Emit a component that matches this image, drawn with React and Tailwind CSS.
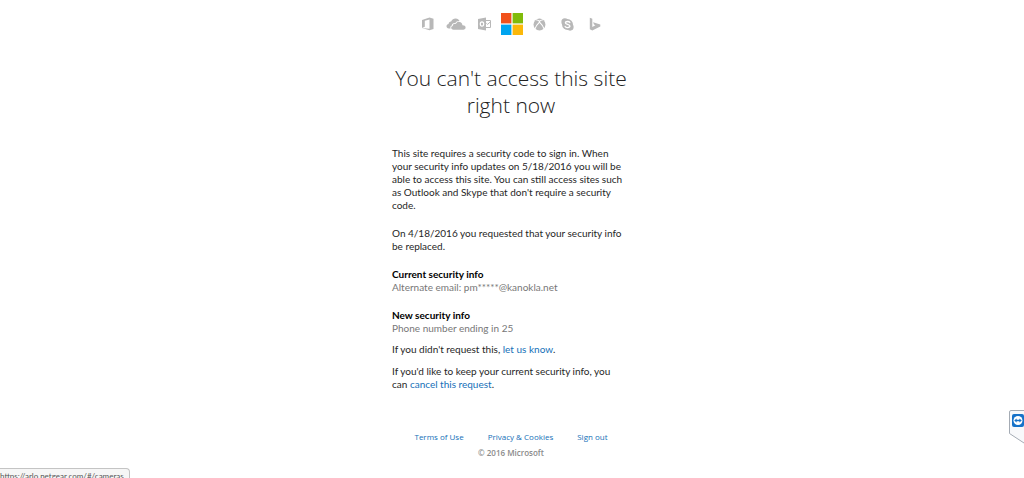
import React from 'react'

const OfficeIcon = () => (
  <svg viewBox="0 0 12 14" className="w-[12px] h-[14px]" fill="#b8b8b8" aria-label="Office">
    <path fillRule="evenodd" d="M0 3 L7.5 0.5 L11.5 1.7 V12 L7.5 13.3 L0 11 L7.5 11.8 V2.6 L2.8 3.7 V9.7 L0 11 Z" />
  </svg>
)

const OneDriveIcon = () => (
  <svg viewBox="0 0 20 12" className="w-[20px] h-[12px]" fill="#b8b8b8" aria-label="OneDrive">
    <path d="M4.6 10.5 H3 C1.2 10.5 0.5 9.4 0.5 8.2 C0.5 7 1.4 6 2.6 5.9 C2.6 4.4 3.8 3.4 5.1 3.5 C6 1.3 7.8 0.3 9.7 0.4 C11.6 0.5 13 1.6 13.6 3.1 C11.8 2.7 10.2 3.5 9.4 5 C7.2 4.7 5.8 6.1 5.8 7.5 C4.4 8 4 9.3 4.6 10.5 Z" />
    <path d="M7.6 11.7 C6 11.7 5.2 10.8 5.2 9.8 C5.2 8.8 6 8.1 6.8 8 C6.7 6.5 8.2 5.5 9.9 5.9 C10.6 4.3 12 3.7 13.4 3.9 C15.2 4.1 16.4 5.4 16.4 7.2 C18.3 7.1 19.6 8 19.6 9.5 C19.6 10.9 18.6 11.7 17.3 11.7 Z" />
  </svg>
)

const OutlookIcon = () => (
  <svg viewBox="0 0 13 14" className="w-[13px] h-[14px]" aria-label="Outlook">
    <path fill="#b8b8b8" d="M0 1.9 L8 0.5 V13.5 L0 12 Z" />
    <ellipse cx="4" cy="7" rx="1.7" ry="2.2" fill="none" stroke="#fff" strokeWidth="1.2" />
    <path fill="none" stroke="#b8b8b8" d="M8 3.5 H12.5 V10.5 H8 M8.3 6.2 L9.6 7.4 L12.4 4.8" />
  </svg>
)

const WindowsLogo = () => (
  <svg viewBox="0 0 22 22" className="w-[22px] h-[22px]" aria-label="Microsoft">
    <rect width="10.4" height="10.4" fill="#f1511b" />
    <rect x="11.6" width="10.4" height="10.4" fill="#80bb0a" />
    <rect y="11.6" width="10.4" height="10.4" fill="#00a4ef" />
    <rect x="11.6" y="11.6" width="10.4" height="10.4" fill="#fbb80a" />
  </svg>
)

const XboxIcon = () => (
  <svg viewBox="0 0 14 14" className="w-[13px] h-[13px]" aria-label="Xbox">
    <circle cx="7" cy="7" r="6.4" fill="#b8b8b8" />
    <path fill="none" stroke="#fff" strokeWidth="1.2" d="M3 1.9 C4.6 1.9 5.8 2.6 7 3.5 C8.2 2.6 9.4 1.9 11 1.9 M2 12 C3 9 4.8 6.4 7 4.4 C9.2 6.4 11 9 12 12" />
  </svg>
)

const SkypeIcon = () => (
  <svg viewBox="0 0 14 14" className="w-[13px] h-[13px]" aria-label="Skype">
    <circle cx="4.2" cy="4.2" r="3.8" fill="#b8b8b8" />
    <circle cx="9.8" cy="9.8" r="3.8" fill="#b8b8b8" />
    <circle cx="7" cy="7" r="5.9" fill="#b8b8b8" />
    <path fill="none" stroke="#fff" strokeWidth="1.4" strokeLinecap="round" d="M9.5 4.9 C8.9 3.4 4.7 3.3 4.7 5.2 C4.7 7.3 9.6 6.4 9.6 8.7 C9.6 10.8 5 10.8 4.4 9" />
  </svg>
)

const BingIcon = () => (
  <svg viewBox="0 0 12 14" className="w-[12px] h-[14px]" fill="#b8b8b8" aria-label="Bing">
    <path d="M0.8 0.8 L3.3 1.7 V10 L6.4 8.2 L5 7.5 L4.1 5.2 L11.3 7.4 V9.6 L3.3 13.6 L0.8 12.2 Z" />
  </svg>
)

const footerLinks = ['Terms of Use', 'Privacy & Cookies', 'Sign out']

const Brands = () => (
  <header className="flex items-center justify-center gap-[10px] pt-[13px] pr-[2px]">
    <div className="flex items-center gap-3">
      <OfficeIcon />
      <OneDriveIcon />
      <OutlookIcon />
    </div>
    <WindowsLogo />
    <div className="flex items-center gap-[15px]">
      <XboxIcon />
      <SkypeIcon />
      <BingIcon />
    </div>
  </header>
)

const Link = ({ children }) => (
  <a href="#" className="text-[#1570b8] hover:underline">{children}</a>
)

const SecurityInfo = ({ title, value }) => (
  <section>
    <h2 className="font-bold text-black">{title}</h2>
    <p className="text-[#777777]">{value}</p>
  </section>
)

export default function App() {
  return (
    <div className="bg-white font-['Open_Sans','Noto_Sans',sans-serif] text-[10px] leading-[13px] text-[#262626]">
      <Brands />

      <main className="mx-auto max-w-[244px] pt-[30px] font-[Lato,'Open_Sans',sans-serif]">
        <h1 className="pr-[2px] text-center font-['Open_Sans',sans-serif] text-[21px] leading-[27px] font-light text-[#222222]">
          You can't access this site<br />right now
        </h1>

        <div className="pt-[28px] pl-[2px] space-y-[15px]">
          <p>
            This site requires a security code to sign in. When<br />
            your security info updates on 5/18/2016 you will be<br />
            able to access this site. You can still access sites such<br />
            as Outlook and Skype that don't require a security<br />
            code.
          </p>
          <p>On 4/18/2016 you requested that your security info<br />be replaced.</p>
          <SecurityInfo title="Current security info" value="Alternate email: pm*****@kanokla.net" />
          <SecurityInfo title="New security info" value="Phone number ending in 25" />
        </div>

        <div className="pt-[8px] pl-[2px] space-y-[9px]">
          <p>If you didn't request this, <Link>let us know</Link>.</p>
          <p>If you'd like to keep your current security info, you<br />can <Link>cancel this request</Link>.</p>
        </div>
      </main>

      <footer className="pt-[39px] pr-[2px] text-center text-[8px]">
        <nav className="flex justify-center gap-6">
          {footerLinks.map((item) => (
            <Link key={item}>{item}</Link>
          ))}
        </nav>
        <p className="pt-[3px] font-semibold text-[#8a8a8a]">© 2016 Microsoft</p>
      </footer>

      {/* remote support tab on the window edge */}
      <button type="button" aria-label="Remote support" className="fixed right-0 bottom-[34px]">
        <svg viewBox="0 0 16 35" className="w-[16px] h-[35px]">
          <path d="M16 1.5 H3 Q1.5 1.5 1.5 3 V24.5 L16 34" fill="#f8f9fb" stroke="#a4abb4" />
          <rect x="4" y="5" width="12" height="13" rx="2" fill="#1672c9" />
          <circle cx="10" cy="11.5" r="4.5" fill="#fff" />
          <path d="M6.2 11.5 L8.6 9.6 V10.8 H11.4 V9.6 L13.8 11.5 L11.4 13.4 V12.2 H8.6 V13.4 Z" fill="#1672c9" />
        </svg>
      </button>

      {/* link target shown in the status strip */}
      <div className="fixed left-0 bottom-0 h-[10px] overflow-hidden rounded-tr-sm border-t border-r border-[#c4c4c4] bg-[#f6f6f6] pr-[5px] font-[Lato,sans-serif] text-[8px] leading-[15px] text-[#555555]">
        https://arlo.netgear.com/#/cameras
      </div>
    </div>
  )
}
